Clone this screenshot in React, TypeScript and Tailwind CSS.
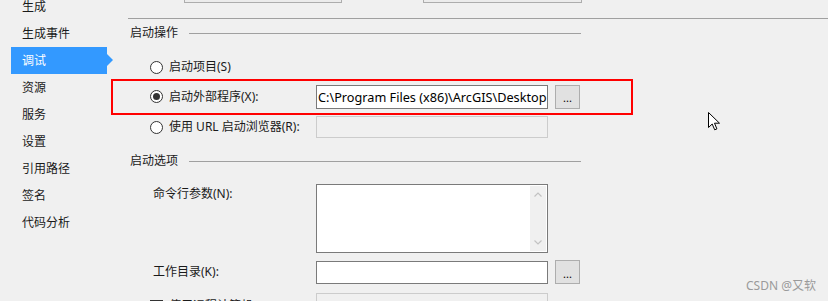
import React from "react";

const NAV = ["生成", "生成事件", "调试", "资源", "服务", "设置", "引用路径", "签名", "代码分析"];

function Radio({ checked = false }: { checked?: boolean }) {
  return (
    <span className="w-[13px] h-[13px] rounded-full border border-[#333] bg-white flex items-center justify-center shrink-0">
      {checked && <span className="w-[7px] h-[7px] rounded-full bg-[#333]" />}
    </span>
  );
}

function Browse() {
  return (
    <div className="w-[25px] h-[24px] bg-[#e1e1e1] border border-[#adadad] flex items-center justify-center text-[11px] leading-none text-black pt-[2px]">
      ...
    </div>
  );
}

function Section({ title }: { title: string }) {
  return (
    <div className="ml-[19px] w-[451px] h-[28px] flex items-center gap-[11px]">
      <span className="text-[12px] text-[#1a1a1a]">{title}</span>
      <div className="flex-1 h-px bg-[#a0a0a0]" />
    </div>
  );
}

export default function App() {
  return (
    <div
      className="relative w-[828px] h-[301px] overflow-hidden bg-[#f0f0f0] flex items-start text-[12px] leading-[18px] text-[#1a1a1a]"
      style={{ fontFamily: '"Noto Sans", "Noto Sans CJK SC", sans-serif' }}
    >
      {/* Sidebar */}
      <nav className="w-[111px] shrink-0 flex flex-col mt-[-7px]">
        {NAV.map((label) => {
          const active = label === "调试";
          return active ? (
            <div key={label} className="relative ml-[11px] w-[96px] h-[27px] bg-[#3399ff] flex items-center pl-[11px] text-white">
              {label}
              <span className="absolute left-full top-[7px] w-0 h-0 border-y-[6px] border-y-transparent border-l-[6px] border-l-[#3399ff]" />
            </div>
          ) : (
            <div key={label} className="h-[27px] flex items-center pl-[22px]">
              {label}
            </div>
          );
        })}
      </nav>

      {/* Main */}
      <div className="flex-1 flex flex-col shrink-0">
        <div className="h-[18px] shrink-0 flex items-start">
          <div className="ml-[73px] w-[158px] h-[3px] bg-[#ececec] border-x border-b border-[#adadad]" />
          <div className="ml-[81px] w-[159px] h-[3px] bg-[#ececec] border-x border-b border-[#adadad]" />
        </div>
        <div className="ml-[17px] h-px shrink-0 bg-[#a0a0a0]" />

        <Section title="启动操作" />

        <div className="mt-[8px] h-[24px] shrink-0 flex items-center pl-[39px] gap-[6px]">
          <Radio />
          <span>启动项目(S)</span>
        </div>

        <div className="w-[522px] h-[36px] shrink-0 border-2 border-[#ff0000] flex items-center pl-[37px] pb-[1px]">
          <div className="w-[166px] flex items-center gap-[6px] shrink-0">
            <Radio checked />
            <span>启动外部程序(X):</span>
          </div>
          <div className="w-[232px] h-[24px] shrink-0 bg-white border border-[#7a7a7a] overflow-hidden whitespace-nowrap pl-[1px] text-[12.7px] leading-[22px] text-black">
            C:\Program Files (x86)\ArcGIS\Desktop10.8\bin\ArcMap.exe
          </div>
          <div className="ml-[7px]">
            <Browse />
          </div>
        </div>

        <div className="h-[24px] shrink-0 flex items-center pl-[39px]">
          <div className="w-[166px] flex items-center gap-[6px] shrink-0">
            <Radio />
            <span>使用 URL 启动浏览器(R):</span>
          </div>
          <div className="w-[232px] h-[22px] bg-[#f0f0f0] border border-[#cccccc]" />
        </div>

        <div className="mt-[8px] shrink-0">
          <Section title="启动选项" />
        </div>

        <div className="mt-[9px] shrink-0 flex items-start pl-[42px]">
          <div className="w-[163px] shrink-0 pt-[1px]">命令行参数(N):</div>
          <div className="w-[232px] h-[69px] bg-white border border-[#7a7a7a] flex justify-end p-px">
            <div className="w-[16px] h-full bg-[#f0f0f0] flex flex-col items-center justify-between py-[6px]">
              <svg width="8" height="5" viewBox="0 0 8 5" fill="none" stroke="#c2c2c2" strokeWidth="1.2">
                <path d="M0.5 4.5 L4 1 L7.5 4.5" />
              </svg>
              <svg width="8" height="5" viewBox="0 0 8 5" fill="none" stroke="#c2c2c2" strokeWidth="1.2">
                <path d="M0.5 0.5 L4 4 L7.5 0.5" />
              </svg>
            </div>
          </div>
        </div>

        <div className="mt-[7px] h-[24px] shrink-0 flex items-center pl-[42px]">
          <div className="w-[163px] shrink-0">工作目录(K):</div>
          <div className="w-[232px] h-[23px] mt-[1px] bg-white border border-[#7a7a7a]" />
          <div className="ml-[7px]">
            <Browse />
          </div>
        </div>

        <div className="mt-[8px] h-[24px] shrink-0 flex items-center pl-[39px]">
          <div className="w-[166px] flex items-center gap-[6px] shrink-0 pt-[4px]">
            <span className="w-[13px] h-[13px] border border-[#333] bg-white shrink-0" />
            <span>使用远程计算机(A)</span>
          </div>
          <div className="w-[232px] h-[22px] bg-[#f0f0f0] border border-[#cccccc]" />
        </div>
      </div>

      {/* mouse cursor */}
      <svg className="absolute left-[708px] top-[112px]" width="13" height="19" viewBox="0 0 13 19">
        <path d="M0.5 0.5 L0.5 15.5 L4.2 12 L6.7 17.8 L8.9 16.9 L6.5 11.2 L11.5 11.2 Z" fill="#fff" stroke="#000" strokeWidth="1" strokeLinejoin="round" />
      </svg>

      <div className="absolute left-[746px] top-[277px] text-[12px] leading-[18px] text-[#9a9a9a]">CSDN @又软</div>
    </div>
  );
}
